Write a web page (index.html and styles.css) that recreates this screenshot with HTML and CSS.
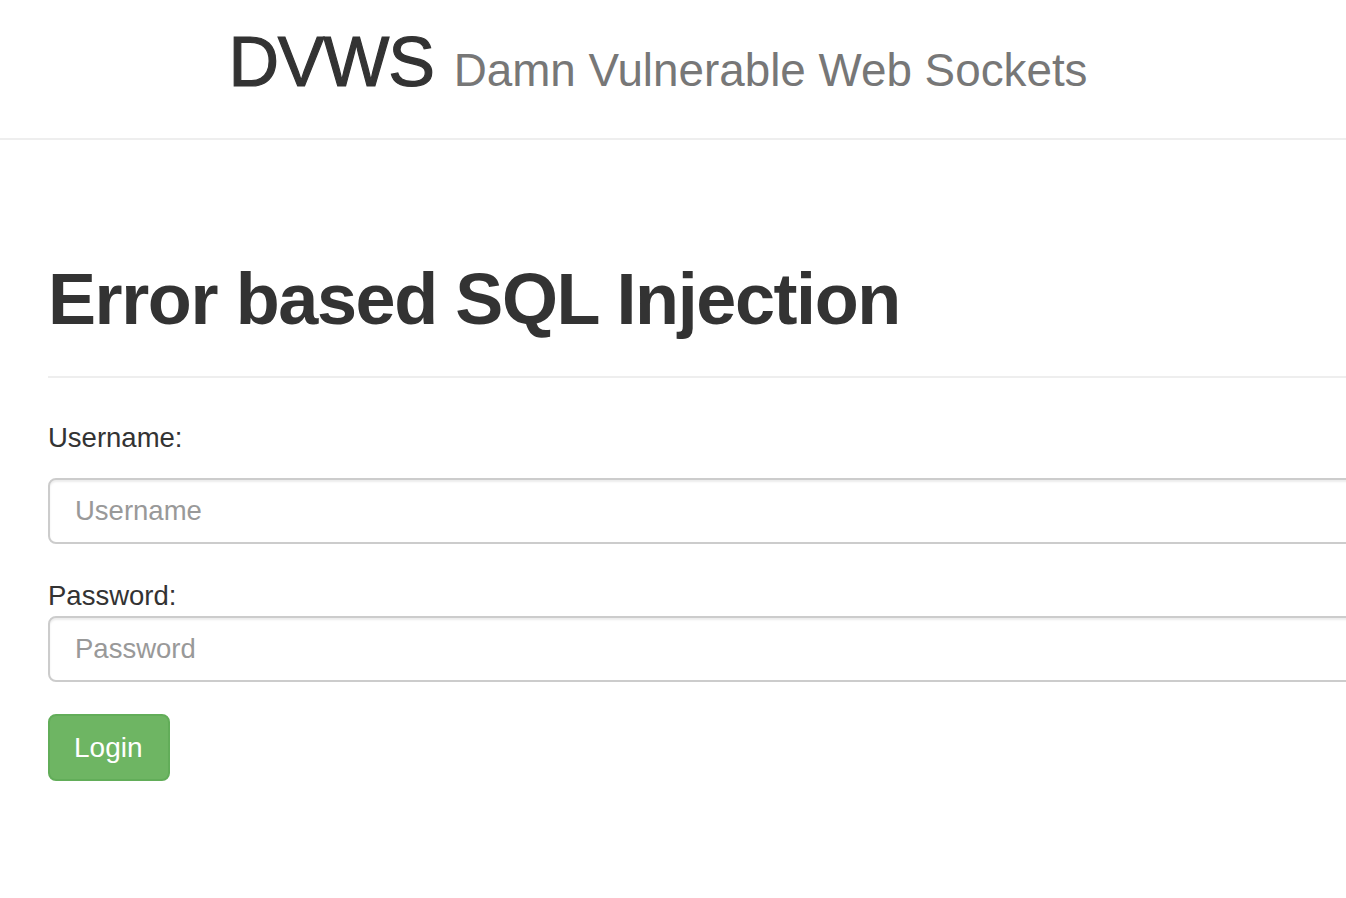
FILE: index.html
```html
<!DOCTYPE html>
<html lang="en">
<head>
<meta charset="utf-8">
<title>DVWS - Error based SQL Injection</title>
<link rel="stylesheet" href="styles.css">
</head>
<body>
<header class="site-header">
  <h1 class="brand"><span class="brand-name">DVWS</span> <small class="brand-sub">Damn Vulnerable Web Sockets</small></h1>
</header>
<main class="content">
  <div class="page-header">
    <h1 class="page-title">Error based SQL Injection</h1>
  </div>
  <form class="login-form">
    <label class="field-label first" for="username">Username:</label>
    <input class="field-input" id="username" type="text" placeholder="Username">
    <label class="field-label second" for="password">Password:</label>
    <input class="field-input" id="password" type="password" placeholder="Password">
    <button class="btn-login" type="button">Login</button>
  </form>
</main>
</body>
</html>
```
FILE: styles.css
```css
html, body {
  margin: 0;
  padding: 0;
  overflow: hidden;
  background: #fff;
}
body {
  font-family: "Liberation Sans", Arial, Helvetica, sans-serif;
  color: #333;
}
.site-header {
  border-bottom: 2px solid #eee;
  padding: 22px 0 37px;
  display: flex;
  justify-content: center;
}
.brand {
  margin: 0;
  font-size: 72px;
  line-height: 79px;
  height: 79px;
  font-weight: normal;
  color: #333;
  white-space: nowrap;
  transform: translateX(-15px);
}
.brand-name {
  font-size: 70px;
  -webkit-text-stroke: 1.2px #333;
  letter-spacing: -1.2px;
}
.brand-sub {
  font-size: 45.8px;
  line-height: 1;
  color: #777;
  font-weight: normal;
}
.content {
  margin-left: 48px;
  width: 1500px;
}
.page-header {
  margin-top: 120px;
  padding-bottom: 37px;
  border-bottom: 2px solid #eee;
}
.page-title {
  margin: 0;
  font-size: 72px;
  line-height: 79px;
  font-weight: bold;
  letter-spacing: -1.4px;
  color: #333;
}
.login-form {
  display: flex;
  flex-direction: column;
  align-items: flex-start;
}
.field-label {
  font-size: 27.5px;
  line-height: 40px;
  color: #333;
}
.field-label.first {
  margin-top: 40px;
  margin-bottom: 20px;
}
.field-label.second {
  margin-top: 32px;
  margin-bottom: 0;
}
.field-input {
  box-sizing: border-box;
  width: 100%;
  height: 66px;
  padding: 0 25px;
  border: 2px solid #ccc;
  border-radius: 8px;
  box-shadow: inset 0 2px 2px rgba(0, 0, 0, 0.075);
  font-family: "Liberation Sans", Arial, Helvetica, sans-serif;
  font-size: 27.5px;
  color: #555;
  background: #fff;
  outline: none;
}
.field-input::placeholder {
  color: #999;
}
.btn-login {
  margin-top: 32px;
  box-sizing: border-box;
  height: 67px;
  width: 122px;
  padding: 0 24px;
  border: 2px solid #62ad59;
  border-radius: 8px;
  background: #6eb563;
  color: #fff;
  font-family: "Liberation Sans", Arial, Helvetica, sans-serif;
  font-size: 28px;
  text-align: left;
  cursor: pointer;
}
```
